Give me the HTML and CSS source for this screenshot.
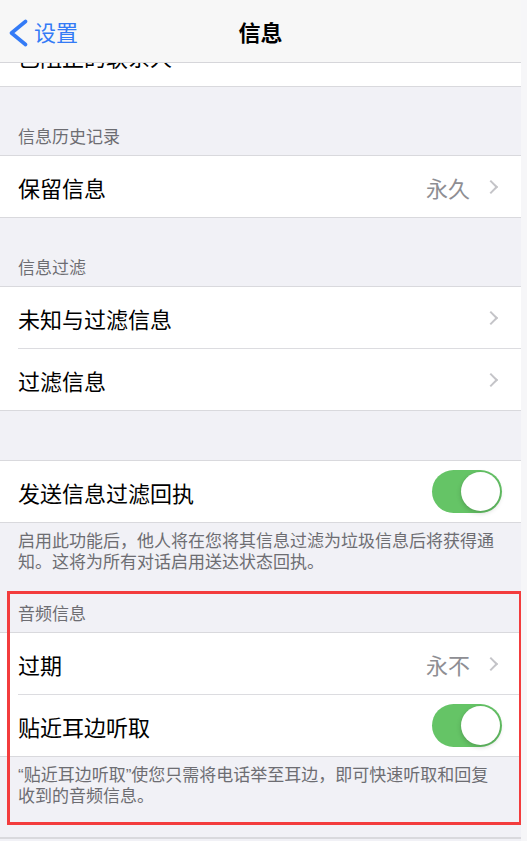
FILE: index.html
```html
<!DOCTYPE html>
<html lang="zh-CN">
<head>
    <meta charset="UTF-8">
    <meta name="viewport" content="width=device-width, initial-scale=1.0">
    <title>信息</title>
    <link rel="stylesheet" href="styles.css">
</head>
<body>
    <div class="screen">
        <header class="navbar">
            <a class="back" href="#">
                <svg class="back-icon" width="20" height="28" viewBox="0 0 20 28">
                    <polyline points="17.5,2.5 3.5,14 17.5,25.5" fill="none" stroke="currentColor" stroke-width="3.6" stroke-linecap="round" stroke-linejoin="round"/>
                </svg>
                <span>设置</span>
            </a>
            <h1 class="title">信息</h1>
            <span></span>
        </header>

        <!-- row scrolled mostly under the bar -->
        <div class="cut">
            <div class="row">
                <div class="row-body">
                    <span class="label">已阻止的联系人</span>
                    <span class="chevron"></span>
                </div>
            </div>
        </div>

        <div class="group-header">信息历史记录</div>
        <div class="group">
            <div class="row">
                <div class="row-body">
                    <span class="label">保留信息</span>
                    <span class="value">永久</span>
                    <span class="chevron"></span>
                </div>
            </div>
        </div>

        <div class="group-header">信息过滤</div>
        <div class="group">
            <div class="row">
                <div class="row-body">
                    <span class="label">未知与过滤信息</span>
                    <span class="chevron"></span>
                </div>
            </div>
            <div class="row">
                <div class="row-body">
                    <span class="label">过滤信息</span>
                    <span class="chevron"></span>
                </div>
            </div>
        </div>

        <div class="group-spacer"></div>
        <div class="group">
            <div class="row">
                <div class="row-body">
                    <span class="label">发送信息过滤回执</span>
                    <span class="switch on"><span class="knob"></span></span>
                </div>
            </div>
        </div>
        <p class="group-footer">启用此功能后，他人将在您将其信息过滤为垃圾信息后将获得通<br>知。这将为所有对话启用送达状态回执。</p>

        <section class="highlight">
            <div class="group-header tight">音频信息</div>
            <div class="group">
                <div class="row">
                    <div class="row-body">
                        <span class="label">过期</span>
                        <span class="value">永不</span>
                        <span class="chevron"></span>
                    </div>
                </div>
                <div class="row">
                    <div class="row-body">
                        <span class="label">贴近耳边听取</span>
                        <span class="switch on"><span class="knob"></span></span>
                    </div>
                </div>
            </div>
            <p class="group-footer">“贴近耳边听取”使您只需将电话举至耳边，即可快速听取和回复<br>收到的音频信息。</p>
        </section>

        <div class="bottom-spacer"></div>
        <div class="group"></div>
    </div>
</body>
</html>
```

FILE: styles.css
```css
* {
    box-sizing: border-box;
}

html, body {
    margin: 0;
    padding: 0;
}

body {
    background-color: #f6f6f8;
    font-family: "Noto Sans CJK SC", "Noto Sans", sans-serif;
    color: #000;
}

.screen {
    width: 521px;
    height: 841px;
    overflow: hidden;
    background-color: #f1f1f6;
}

/* Navigation bar */
.navbar {
    height: 63px;
    display: grid;
    grid-template-columns: 1fr auto 1fr;
    align-items: center;
    background-color: #f7f7f7;
    border-bottom: 1px solid #d6d6da;
}

.back {
    display: flex;
    align-items: center;
    color: #347bf6;
    text-decoration: none;
    font-size: 22px;
    line-height: 30px;
    padding-left: 8px;
}

.back-icon {
    margin-top: 4px;
    margin-right: 6px;
}

.title {
    margin: 0;
    font-size: 22px;
    font-weight: 700;
    line-height: 30px;
}

/* Rows */
.cut {
    height: 24px;
    overflow: hidden;
    background-color: #fff;
    border-bottom: 1px solid #d9d9dd;
}

.cut .row {
    margin-top: -38px;
}

.group {
    background-color: #fff;
    border-top: 1px solid #d9d9dd;
    border-bottom: 1px solid #d9d9dd;
    min-height: 2px;
}

.row {
    padding-left: 18px;
}

.row-body {
    display: flex;
    align-items: center;
    height: 61px;
    padding-right: 19px;
}

.row + .row .row-body {
    height: 62px;
    border-top: 1px solid #dcdce0;
}

.label {
    flex: 1;
    font-size: 22px;
    line-height: 30px;
}

.value {
    font-size: 22px;
    line-height: 30px;
    color: #8e8e93;
    margin-right: 16px;
}

.chevron {
    width: 10px;
    height: 10px;
    margin-right: 6px;
    border-top: 2.5px solid #c4c4c8;
    border-right: 2.5px solid #c4c4c8;
    transform: rotate(45deg);
}

/* Switch */
.switch {
    width: 70px;
    height: 43px;
    border-radius: 22px;
    background-color: #e9e9eb;
    display: flex;
    align-items: center;
    padding: 2px;
}

.switch.on {
    background-color: #65c466;
    justify-content: flex-end;
}

.knob {
    width: 39px;
    height: 39px;
    border-radius: 50%;
    background-color: #fff;
    box-shadow: 0 2px 5px rgba(0, 0, 0, 0.18), 0 0 1px rgba(0, 0, 0, 0.1);
}

/* Section headers and footers */
.group-header {
    height: 68px;
    display: flex;
    align-items: flex-end;
    padding: 0 18px 9px;
    font-size: 17px;
    line-height: 20px;
    color: #6d6d72;
}

.group-header.tight {
    height: 59px;
}

.group-spacer {
    height: 49px;
}

.group-footer {
    margin: 0;
    padding: 8px 10px 0 18px;
    font-family: "Liberation Sans", "Noto Sans CJK SC", sans-serif;
    font-size: 17px;
    line-height: 21px;
    color: #6d6d72;
    white-space: nowrap;
}

.bottom-spacer {
    height: 30px;
}

/* Red annotation frame around the audio section */
.highlight {
    position: relative;
}

.highlight::after {
    content: "";
    position: absolute;
    left: 7px;
    right: -1px;
    top: 18px;
    bottom: -18px;
    border: 3px solid #f33c3d;
    pointer-events: none;
}
```
